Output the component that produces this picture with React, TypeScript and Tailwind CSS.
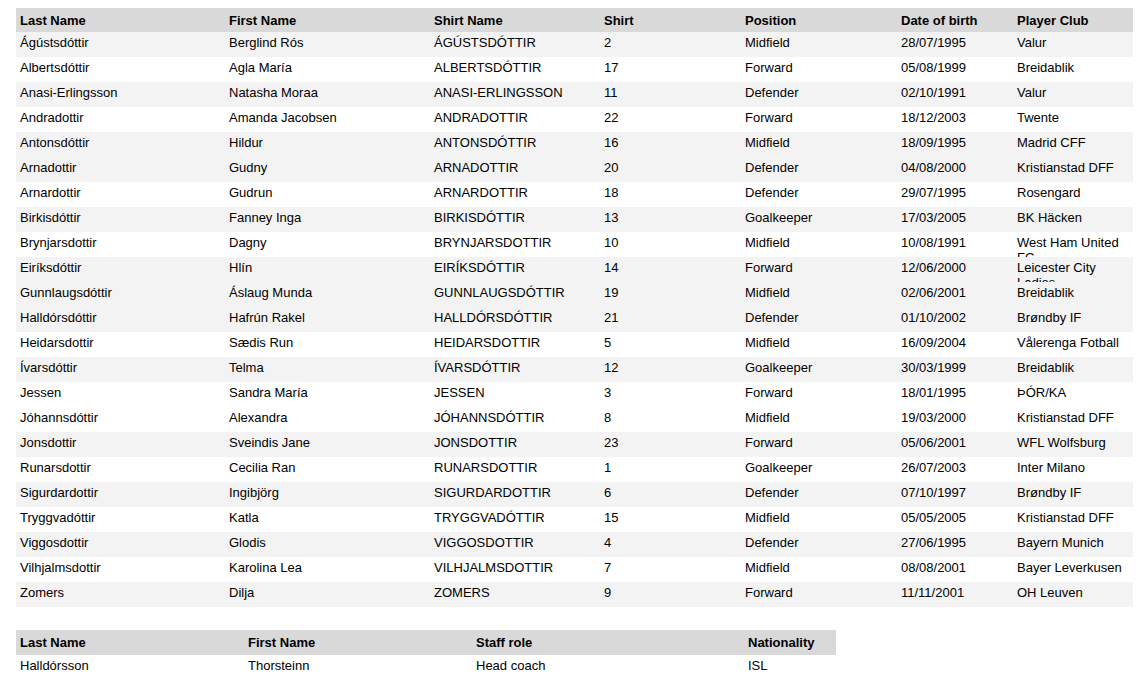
const players: string[][] = [
  ["Ágústsdóttir", "Berglind Rós", "ÁGÚSTSDÓTTIR", "2", "Midfield", "28/07/1995", "Valur"],
  ["Albertsdóttir", "Agla María", "ALBERTSDÓTTIR", "17", "Forward", "05/08/1999", "Breidablik"],
  ["Anasi-Erlingsson", "Natasha Moraa", "ANASI-ERLINGSSON", "11", "Defender", "02/10/1991", "Valur"],
  ["Andradottir", "Amanda Jacobsen", "ANDRADOTTIR", "22", "Forward", "18/12/2003", "Twente"],
  ["Antonsdóttir", "Hildur", "ANTONSDÓTTIR", "16", "Midfield", "18/09/1995", "Madrid CFF"],
  ["Arnadottir", "Gudny", "ARNADOTTIR", "20", "Defender", "04/08/2000", "Kristianstad DFF"],
  ["Arnardottir", "Gudrun", "ARNARDOTTIR", "18", "Defender", "29/07/1995", "Rosengard"],
  ["Birkisdóttir", "Fanney Inga", "BIRKISDÓTTIR", "13", "Goalkeeper", "17/03/2005", "BK Häcken"],
  ["Brynjarsdottir", "Dagny", "BRYNJARSDOTTIR", "10", "Midfield", "10/08/1991", "West Ham United FC"],
  ["Eiríksdóttir", "Hlín", "EIRÍKSDÓTTIR", "14", "Forward", "12/06/2000", "Leicester City Ladies"],
  ["Gunnlaugsdóttir", "Áslaug Munda", "GUNNLAUGSDÓTTIR", "19", "Midfield", "02/06/2001", "Breidablik"],
  ["Halldórsdóttir", "Hafrún Rakel", "HALLDÓRSDÓTTIR", "21", "Defender", "01/10/2002", "Brøndby IF"],
  ["Heidarsdottir", "Sædis Run", "HEIDARSDOTTIR", "5", "Midfield", "16/09/2004", "Vålerenga Fotball"],
  ["Ívarsdóttir", "Telma", "ÍVARSDÓTTIR", "12", "Goalkeeper", "30/03/1999", "Breidablik"],
  ["Jessen", "Sandra María", "JESSEN", "3", "Forward", "18/01/1995", "ÞÓR/KA"],
  ["Jóhannsdóttir", "Alexandra", "JÓHANNSDÓTTIR", "8", "Midfield", "19/03/2000", "Kristianstad DFF"],
  ["Jonsdottir", "Sveindis Jane", "JONSDOTTIR", "23", "Forward", "05/06/2001", "WFL Wolfsburg"],
  ["Runarsdottir", "Cecilia Ran", "RUNARSDOTTIR", "1", "Goalkeeper", "26/07/2003", "Inter Milano"],
  ["Sigurdardottir", "Ingibjörg", "SIGURDARDOTTIR", "6", "Defender", "07/10/1997", "Brøndby IF"],
  ["Tryggvadóttir", "Katla", "TRYGGVADÓTTIR", "15", "Midfield", "05/05/2005", "Kristianstad DFF"],
  ["Viggosdottir", "Glodis", "VIGGOSDOTTIR", "4", "Defender", "27/06/1995", "Bayern Munich"],
  ["Vilhjalmsdottir", "Karolina Lea", "VILHJALMSDOTTIR", "7", "Midfield", "08/08/2001", "Bayer Leverkusen"],
  ["Zomers", "Dilja", "ZOMERS", "9", "Forward", "11/11/2001", "OH Leuven"],
];

// rows shaded in the export (not strictly alternating)
const shaded = new Set([0, 2, 4, 5, 7, 9, 10, 11, 13, 16, 18, 20, 22]);

const playerHead = ["Last Name", "First Name", "Shirt Name", "Shirt", "Position", "Date of birth", "Player Club"];
const playerCols = "grid grid-cols-[209px_205px_170px_141px_156px_116px_120px] w-[1117px]";

const staffHead = ["Last Name", "First Name", "Staff role", "Nationality"];
const staffCols = "grid grid-cols-[228px_228px_272px_92px] w-[820px]";

function Cell({ text }: { text: string }) {
  return <div className="px-1 pt-[3px] h-[25px] overflow-hidden">{text}</div>;
}

export default function App() {
  return (
    <div className="min-h-screen bg-white pt-2 px-4 text-[13px] leading-[15px] text-black font-['Liberation_Sans',Arial,sans-serif]">
      {/* Players */}
      <div className="flex flex-col">
        <div className={`${playerCols} h-[24px] bg-[#d9d9d9] font-bold`}>
          {playerHead.map((h) => (
            <div key={h} className="px-1 pt-[5px]">{h}</div>
          ))}
        </div>
        {players.map((p, i) => (
          <div
            key={p[0]}
            className={`${playerCols} h-[25px] overflow-hidden ${shaded.has(i) ? "bg-[#f3f3f3]" : "bg-white"}`}
          >
            {p.map((t, j) => (
              <Cell key={j} text={t} />
            ))}
          </div>
        ))}
      </div>

      {/* Staff */}
      <div className="flex flex-col mt-[23px]">
        <div className={`${staffCols} h-[25px] bg-[#d9d9d9] font-bold`}>
          {staffHead.map((h) => (
            <div key={h} className="px-1 pt-[5px]">{h}</div>
          ))}
        </div>
        <div className={`${staffCols} h-[25px] overflow-hidden`}>
          <Cell text="Halldórsson" />
          <Cell text="Thorsteinn" />
          <Cell text="Head coach" />
          <Cell text="ISL" />
        </div>
      </div>
    </div>
  );
}
